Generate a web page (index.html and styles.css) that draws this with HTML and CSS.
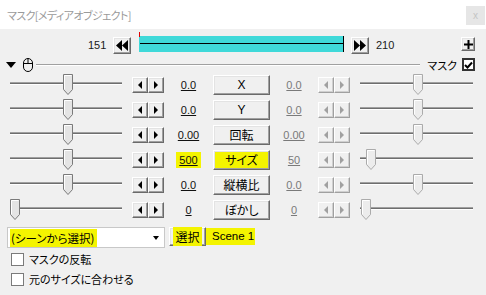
FILE: index.html
```html
<!DOCTYPE html>
<html lang="ja">
<head>
  <meta charset="UTF-8" />
  <title>マスク[メディアオブジェクト]</title>
  <link rel="stylesheet" href="styles.css">
</head>
<body>
  <svg class="defs" width="0" height="0">
    <symbol id="thumb" viewBox="0 0 10 21">
      <path d="M0.5 0.5H9.5V15.5L5 20.5L0.5 15.5Z" fill="#e4e4e4" stroke="#7a7a7a"/>
      <path d="M1.5 15V1.5H8.5" fill="none" stroke="#fff"/>
    </symbol>
    <symbol id="thumb-off" viewBox="0 0 10 21">
      <path d="M0.5 0.5H9.5V15.5L5 20.5L0.5 15.5Z" fill="#ececec" stroke="#ababab"/>
      <path d="M1.5 15V1.5H8.5" fill="none" stroke="#fff"/>
    </symbol>
  </svg>

  <div class="titlebar">
    <span class="title">マスク[メディアオブジェクト]</span>
    <span class="close">x</span>
  </div>

  <div class="frame-row">
    <span class="frame-num first">151</span>
    <button class="btn jump">
      <svg width="12" height="11" viewBox="0 0 12 11"><path d="M6 0V11L0 5.5Z M12 0V11L6 5.5Z" fill="#000"/></svg>
    </button>
    <div class="timeline"><span class="tick"></span><span class="cursor"></span></div>
    <button class="btn jump">
      <svg width="12" height="11" viewBox="0 0 12 11"><path d="M0 0V11L6 5.5Z M6 0V11L12 5.5Z" fill="#000"/></svg>
    </button>
    <span class="frame-num last">210</span>
    <button class="btn plus">
      <svg width="9" height="9" viewBox="0 0 9 9"><path d="M3.5 0H5.5V3.5H9V5.5H5.5V9H3.5V5.5H0V3.5H3.5Z" fill="#000"/></svg>
    </button>
  </div>

  <div class="group-row">
    <span class="collapse"></span>
    <svg class="mouse" width="10" height="14" viewBox="0 0 10 14">
      <rect x="0.5" y="0.5" width="9" height="13" rx="4.5" fill="none" stroke="#000"/>
      <path d="M0.5 5.5H9.5M5 0.5V5.5" stroke="#000"/>
    </svg>
    <span class="group-line"></span>
    <span class="group-name">マスク</span>
    <span class="check on">
      <svg width="9" height="8" viewBox="0 0 9 8"><path d="M1 4L3.5 6.5L8 1.5" fill="none" stroke="#000" stroke-width="2"/></svg>
    </span>
  </div>

  <div class="tracks">
    <div class="track">
      <div class="slider"><span class="rail"></span><svg class="thumb" style="left:53px"><use href="#thumb"/></svg></div>
      <div class="spin"><button class="btn arr"><i class="tri-l"></i></button><button class="btn arr"><i class="tri-r"></i></button></div>
      <span class="val"><u>0.0</u></span>
      <button class="btn name">X</button>
      <span class="val off"><u>0.0</u></span>
      <div class="spin off"><button class="btn arr"><i class="tri-l"></i></button><button class="btn arr"><i class="tri-r"></i></button></div>
      <div class="slider right"><span class="rail"></span><svg class="thumb" style="left:53px"><use href="#thumb-off"/></svg></div>
    </div>
    <div class="track">
      <div class="slider"><span class="rail"></span><svg class="thumb" style="left:53px"><use href="#thumb"/></svg></div>
      <div class="spin"><button class="btn arr"><i class="tri-l"></i></button><button class="btn arr"><i class="tri-r"></i></button></div>
      <span class="val"><u>0.0</u></span>
      <button class="btn name">Y</button>
      <span class="val off"><u>0.0</u></span>
      <div class="spin off"><button class="btn arr"><i class="tri-l"></i></button><button class="btn arr"><i class="tri-r"></i></button></div>
      <div class="slider right"><span class="rail"></span><svg class="thumb" style="left:53px"><use href="#thumb-off"/></svg></div>
    </div>
    <div class="track">
      <div class="slider"><span class="rail"></span><svg class="thumb" style="left:53px"><use href="#thumb"/></svg></div>
      <div class="spin"><button class="btn arr"><i class="tri-l"></i></button><button class="btn arr"><i class="tri-r"></i></button></div>
      <span class="val"><u>0.00</u></span>
      <button class="btn name">回転</button>
      <span class="val off"><u>0.00</u></span>
      <div class="spin off"><button class="btn arr"><i class="tri-l"></i></button><button class="btn arr"><i class="tri-r"></i></button></div>
      <div class="slider right"><span class="rail"></span><svg class="thumb" style="left:53px"><use href="#thumb-off"/></svg></div>
    </div>
    <div class="track">
      <div class="slider"><span class="rail"></span><svg class="thumb" style="left:53px"><use href="#thumb"/></svg></div>
      <div class="spin"><button class="btn arr"><i class="tri-l"></i></button><button class="btn arr"><i class="tri-r"></i></button></div>
      <span class="val"><span class="hl"><u>500</u></span></span>
      <button class="btn name marked">サイズ</button>
      <span class="val off"><u>50</u></span>
      <div class="spin off"><button class="btn arr"><i class="tri-l"></i></button><button class="btn arr"><i class="tri-r"></i></button></div>
      <div class="slider right"><span class="rail"></span><svg class="thumb" style="left:6px"><use href="#thumb-off"/></svg></div>
    </div>
    <div class="track">
      <div class="slider"><span class="rail"></span><svg class="thumb" style="left:53px"><use href="#thumb"/></svg></div>
      <div class="spin"><button class="btn arr"><i class="tri-l"></i></button><button class="btn arr"><i class="tri-r"></i></button></div>
      <span class="val"><u>0.0</u></span>
      <button class="btn name">縦横比</button>
      <span class="val off"><u>0.0</u></span>
      <div class="spin off"><button class="btn arr"><i class="tri-l"></i></button><button class="btn arr"><i class="tri-r"></i></button></div>
      <div class="slider right"><span class="rail"></span><svg class="thumb" style="left:53px"><use href="#thumb-off"/></svg></div>
    </div>
    <div class="track">
      <div class="slider"><span class="rail"></span><svg class="thumb" style="left:0px"><use href="#thumb"/></svg></div>
      <div class="spin"><button class="btn arr"><i class="tri-l"></i></button><button class="btn arr"><i class="tri-r"></i></button></div>
      <span class="val"><u>0</u></span>
      <button class="btn name">ぼかし</button>
      <span class="val off"><u>0</u></span>
      <div class="spin off"><button class="btn arr"><i class="tri-l"></i></button><button class="btn arr"><i class="tri-r"></i></button></div>
      <div class="slider right"><span class="rail"></span><svg class="thumb" style="left:1px"><use href="#thumb-off"/></svg></div>
    </div>
  </div>

  <div class="scene-row">
    <div class="combo">
      <span class="combo-text"><span class="hl">(シーンから選択)</span></span>
      <span class="combo-arrow"></span>
    </div>
    <button class="btn pick"><span class="hl">選択</span></button>
    <span class="scene-name">Scene 1</span>
  </div>

  <label class="opt"><span class="check"></span>マスクの反転</label>
  <label class="opt"><span class="check"></span>元のサイズに合わせる</label>
</body>
</html>
```

FILE: styles.css
```css
body {
  margin: 0;
  width: 486px;
  height: 295px;
  overflow: hidden;
  background: #f0f0f0;
  font-family: "Liberation Sans", "Noto Sans CJK JP", sans-serif;
  font-size: 12px;
  color: #000;
}
.defs { position: absolute; }

.titlebar {
  height: 29px;
  background: #fff;
  display: flex;
  align-items: center;
  justify-content: space-between;
  padding: 0 1px 0 7px;
}
.title {
  color: #9a9a9a;
  font-family: "Noto Sans CJK JP", sans-serif;
  font-size: 11px;
  letter-spacing: -0.6px;
  font-feature-settings: "palt";
}
.close {
  width: 19px;
  height: 19px;
  margin-top: 2px;
  background: #e6e6e6;
  color: #c4c4c4;
  font-size: 10px;
  display: flex;
  align-items: center;
  justify-content: center;
}

.btn {
  box-sizing: border-box;
  padding: 0;
  margin: 0;
  background: #f0f0f0;
  border: 1px solid;
  border-color: #fff #6a6a6a #6a6a6a #fff;
  box-shadow: inset -1px -1px #a0a0a0, inset 1px 1px #e3e3e3;
  display: flex;
  align-items: center;
  justify-content: center;
  font-family: "Liberation Sans", "Noto Sans CJK JP", sans-serif;
  font-size: 12px;
  color: #000;
}

/* frame range row */
.frame-row {
  display: flex;
  align-items: flex-start;
  height: 28px;
}
.frame-num {
  margin-top: 8px;
  line-height: 17px;
  font-size: 11px;
  color: #1a1a1a;
}
.frame-num.first { margin-left: 88px; width: 25px; }
.frame-num.last { margin-left: 7px; }
.jump { width: 18px; height: 17px; margin-top: 8px; }
.timeline {
  position: relative;
  width: 204px;
  height: 16px;
  margin: 7px 0 0 8px;
  background: #3fd9d9;
  border-right: 1px solid #000;
}
.timeline .tick {
  position: absolute;
  left: 0;
  top: -4px;
  width: 1px;
  height: 5px;
  background: #e00000;
}
.timeline .cursor {
  position: absolute;
  left: 1px;
  right: 0;
  top: 7px;
  height: 1px;
  background: #000;
}
.timeline + .jump { margin-left: 7px; }
.plus { width: 14px; height: 14px; margin: 8px 11px 0 auto; }

/* group header */
.group-row {
  display: flex;
  align-items: center;
  height: 15px;
}
.collapse {
  margin-left: 6px;
  width: 0;
  height: 0;
  border-top: 6px solid #000;
  border-left: 5px solid transparent;
  border-right: 5px solid transparent;
}
.mouse { margin-left: 7px; }
.group-line {
  flex: 1;
  margin-left: 3px;
  height: 1px;
  background: #a0a0a0;
  border-bottom: 1px solid #fff;
}
.group-name {
  margin-left: 7px;
  font-family: "Noto Sans CJK JP", sans-serif;
  font-size: 11px;
  font-feature-settings: "palt";
}
.check {
  box-sizing: border-box;
  width: 13px;
  height: 13px;
  background: #fff;
  border: 1px solid #7a7a7a;
  display: flex;
  align-items: center;
  justify-content: center;
}
.check.on {
  border: 2px solid #333;
  margin: 0 11px 0 5px;
}

/* parameter tracks */
.track {
  display: flex;
  align-items: center;
  height: 25px;
}
.slider {
  position: relative;
  display: flex;
  align-items: flex-start;
  width: 112px;
  height: 21px;
  margin-left: 10px;
}
.slider.right { width: 113px; }
.rail {
  flex: 1;
  margin-top: 8px;
  height: 1px;
  background: #6e6e6e;
  border-top: 1px solid #a0a0a0;
  border-bottom: 1px solid #fff;
}
.thumb {
  position: absolute;
  top: 0;
  width: 10px;
  height: 21px;
}
.spin { display: flex; margin-left: 10px; }
.spin.off { margin-left: 0; }
.arr { width: 16px; height: 16px; }
.tri-l, .tri-r {
  width: 0;
  height: 0;
  border-top: 4px solid transparent;
  border-bottom: 4px solid transparent;
}
.tri-l { border-right: 4px solid #000; }
.tri-r { border-left: 4px solid #000; }
.spin.off .tri-l { border-right-color: #a0a0a0; }
.spin.off .tri-r { border-left-color: #a0a0a0; }
.spin.off .arr { border-color: #fff #a0a0a0 #a0a0a0 #fff; box-shadow: inset -1px -1px #d0d0d0; }

.val {
  width: 49px;
  text-align: center;
  font-size: 11px;
  color: #111;
}
.val.off { width: 48px; color: #7a7a7a; }
.hl { background: #f4f400; padding: 2px 3px; }
.name {
  width: 57px;
  height: 20px;
  font-feature-settings: "palt";
}
.name.marked { background: #f4f400; }

/* scene selector */
.scene-row {
  display: flex;
  align-items: flex-start;
  height: 21px;
  margin-top: 5px;
  padding-left: 7px;
}
.combo {
  box-sizing: border-box;
  display: flex;
  align-items: center;
  width: 158px;
  height: 21px;
  background: #fff;
  border: 1px solid #c8c8c8;
}
.combo-text {
  flex: 1;
  padding-left: 2px;
  font-family: "Noto Sans CJK JP", sans-serif;
  font-size: 11.5px;
  font-feature-settings: "palt";
}
.combo-text .hl { padding: 1px 2px 1px 1px; }
.combo-arrow {
  margin-right: 5px;
  width: 0;
  height: 0;
  border-top: 4px solid #000;
  border-left: 3px solid transparent;
  border-right: 3px solid transparent;
}
.pick {
  width: 37px;
  height: 19px;
  margin-left: 4px;
  font-family: "Noto Sans CJK JP", sans-serif;
}
.pick .hl { padding: 1px 2px; }
.scene-name {
  width: 49px;
  height: 17px;
  margin-top: 1px;
  box-sizing: border-box;
  padding-left: 6px;
  line-height: 17px;
  background: #f4f400;
  font-size: 11.5px;
}

/* options */
.opt {
  display: flex;
  align-items: center;
  height: 20px;
  padding-left: 11px;
  font-family: "Noto Sans CJK JP", sans-serif;
  font-size: 11px;
  font-feature-settings: "palt";
}
.scene-row + .opt { margin-top: 1px; }
.opt .check { margin-right: 5px; }
```
